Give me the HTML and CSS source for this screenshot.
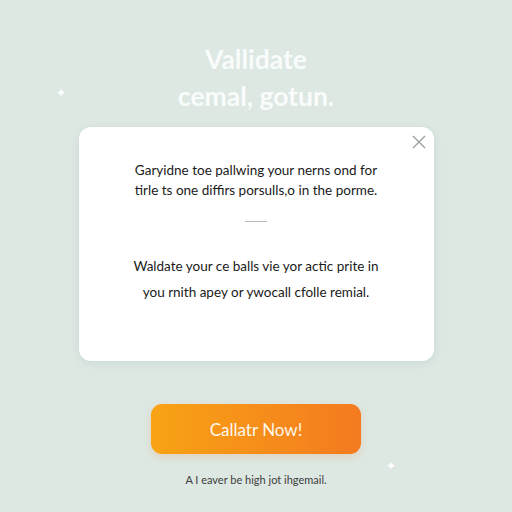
FILE: index.html
```html
<!DOCTYPE html>
<html lang="en">
<head>
  <meta charset="UTF-8">
  <meta name="viewport" content="width=device-width, initial-scale=1.0">
  <title>Validate email</title>
  <link rel="stylesheet" href="styles.css">
</head>
<body>
  <div class="page">
    <span class="spark spark-left">&#10022;</span>
    <span class="spark spark-right">&#10022;</span>

    <h1 class="title">Vallidate<br>cemal, gotun.</h1>

    <div class="card">
      <button class="close" aria-label="Close">
        <svg width="14" height="14" viewBox="0 0 14 14"><path d="M1 1 L13 13 M13 1 L1 13" stroke="#9aa0a0" stroke-width="1.4" fill="none"/></svg>
      </button>
      <p class="lead">Garyidne toe pallwing your nerns ond for<br>tirle ts one diffirs porsulls,o in the porme.</p>
      <div class="divider"></div>
      <p class="body">Waldate your ce balls vie yor actic prite in<br>you rnith apey or ywocall cfolle remial.</p>
    </div>

    <button class="cta">Callatr Now!</button>
    <p class="note">A I eaver be high jot ihgemail.</p>
  </div>
</body>
</html>
```

FILE: styles.css
```css
*, *::before, *::after { box-sizing: border-box; }
html, body {
  margin: 0; padding: 0; height: 100%;
  font-family: 'Lato', 'Open Sans', sans-serif;
  background: #dde8e3;
}
.page {
  position: relative;
  height: 512px;
  display: flex;
  flex-direction: column;
  align-items: center;
  padding-top: 41px;
}
.title {
  margin: 0;
  font-size: 26.5px;
  line-height: 37px;
  font-weight: 700;
  color: #f9fcfb;
  text-align: center;
}
.card {
  position: relative;
  margin-top: 12px;
  width: 355px;
  height: 234px;
  background: #fff;
  border-radius: 12px;
  box-shadow: 0 2px 8px rgba(80, 110, 100, 0.12);
  text-align: center;
  padding-top: 33px;
  color: #1a1a1a;
}
.close {
  position: absolute;
  top: 8px;
  right: 8px;
  background: none;
  border: none;
  padding: 0;
  width: 14px;
  height: 14px;
  cursor: pointer;
}
.lead {
  margin: 0;
  font-size: 13.5px;
  line-height: 20px;
}
.divider {
  width: 22px;
  height: 1px;
  background: #b8bcbb;
  margin: 21px auto 0;
}
.body {
  margin: 31px 0 0;
  font-size: 13.5px;
  line-height: 26px;
}
.cta {
  margin-top: 43px;
  width: 210px;
  height: 50px;
  border: none;
  border-radius: 11px;
  background: linear-gradient(90deg, #f8a314 0%, #f47a20 100%);
  color: #fff8ec;
  font-family: inherit;
  font-size: 17px;
  font-weight: 400;
  box-shadow: 0 3px 8px rgba(240, 120, 30, 0.2);
}
.note {
  margin: 19px 0 0;
  font-size: 11px;
  color: #3c3c3c;
}
.spark {
  position: absolute;
  color: #fff;
  font-size: 12px;
  line-height: 1;
}
.spark-left { left: 56px; top: 87px; }
.spark-right { left: 386px; top: 460px; }
```
